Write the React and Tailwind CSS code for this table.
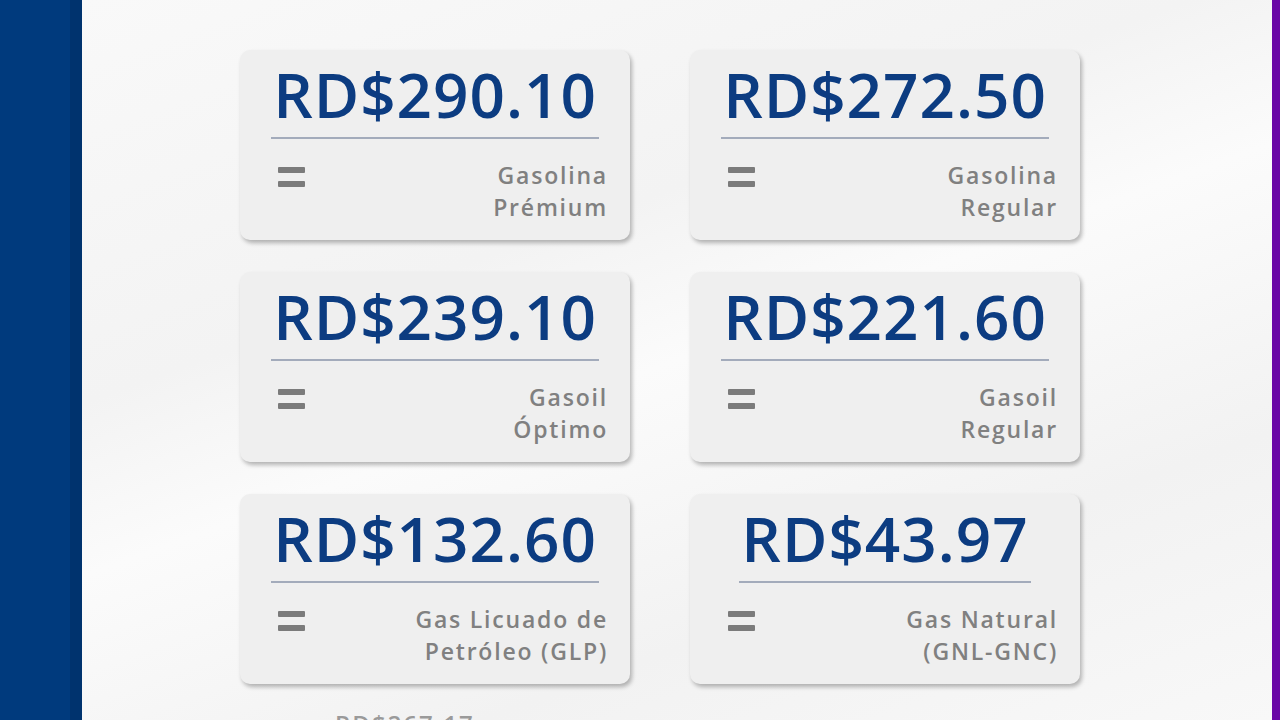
import React from "react";

const fuels = [
  { price: "RD$290.10", label: ["Gasolina", "Prémium"] },
  { price: "RD$272.50", label: ["Gasolina", "Regular"] },
  { price: "RD$239.10", label: ["Gasoil", "Óptimo"] },
  { price: "RD$221.60", label: ["Gasoil", "Regular"] },
  { price: "RD$132.60", label: ["Gas Licuado de", "Petróleo (GLP)"] },
  { price: "RD$43.97", label: ["Gas Natural", "(GNL-GNC)"] },
];

const EqualsIcon = () => (
  <div className="flex flex-col gap-[8px]">
    <span className="block w-[27px] h-[6px] rounded-[1px] bg-[#7b7b7b]" />
    <span className="block w-[27px] h-[6px] rounded-[1px] bg-[#7b7b7b]" />
  </div>
);

const FuelCard = ({ price, label }) => (
  <div className="h-[190px] rounded-[10px] bg-[#efefef] shadow-[2px_3px_4px_rgba(0,0,0,0.28)] pt-[8px] pr-[22px] pl-[38px]">
    <div className="flex justify-center -ml-[16px]">
      <div className="px-[2px] border-b-2 border-[#a3abbb] pb-[7px]">
        <div className="text-[62px] leading-[72px] font-semibold tracking-[1px] text-[#0c3c81]">
          {price}
        </div>
      </div>
    </div>
    <div className="flex justify-between mt-[28px]">
      <EqualsIcon />
      <div className="text-right text-[23px] leading-[32px] font-semibold tracking-[1.8px] text-[#808080] -mt-[8px]">
        {label.map((l) => (
          <div key={l}>{l}</div>
        ))}
      </div>
    </div>
  </div>
);

export default function App() {
  return (
    <div
      className="flex w-[1280px] h-[720px] overflow-hidden"
      style={{ fontFamily: '"Open Sans", "Liberation Sans", sans-serif' }}
    >
      {/* Left blue band */}
      <div className="w-[82px] bg-[#003a7d] flex">
        <div className="flex-1" />
        <div className="w-[12px] bg-[#00336e]" />
      </div>

      {/* Main */}
      <div className="flex-1 bg-[linear-gradient(160deg,#f9f9f9_0%,#f3f3f3_35%,#fbfbfb_50%,#f2f2f2_75%,#f8f8f8_100%)] pl-[158px] pt-[50px]">
        <div className="grid grid-cols-[390px_390px] gap-x-[60px] gap-y-[32px]">
          {fuels.map((f) => (
            <FuelCard key={f.price} {...f} />
          ))}
        </div>
        <div className="mt-[22px] ml-[95px] text-[24px] font-semibold text-[#9a9a9a] tracking-[2px]">
          RD$267.17
        </div>
      </div>

      {/* Right purple band */}
      <div className="w-[8px] bg-[#6a06a6]" />
    </div>
  );
}
